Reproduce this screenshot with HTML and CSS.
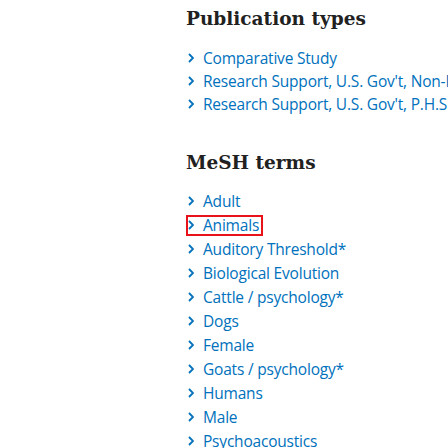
FILE: index.html
```html
<!DOCTYPE html>
<html lang="en">
<head>
<meta charset="utf-8">
<title>Publication types</title>
<link rel="stylesheet" href="styles.css">
</head>
<body>
<div class="page">
  <section class="section pubtypes">
    <h2 class="heading">Publication types</h2>
    <ul class="keywords">
      <li><a class="kw" href="#"><span class="chev"><svg viewBox="0 0 6 10" width="6" height="10"><path d="M1 1 L5 5 L1 9" fill="none" stroke="currentColor" stroke-width="1.8"/></svg></span>Comparative Study</a></li>
      <li><a class="kw" href="#"><span class="chev"><svg viewBox="0 0 6 10" width="6" height="10"><path d="M1 1 L5 5 L1 9" fill="none" stroke="currentColor" stroke-width="1.8"/></svg></span>Research Support, U.S. Gov't, Non-P.H.S.</a></li>
      <li><a class="kw" href="#"><span class="chev"><svg viewBox="0 0 6 10" width="6" height="10"><path d="M1 1 L5 5 L1 9" fill="none" stroke="currentColor" stroke-width="1.8"/></svg></span>Research Support, U.S. Gov't, P.H.S.</a></li>
    </ul>
  </section>
  <section class="section mesh">
    <h2 class="heading">MeSH terms</h2>
    <ul class="keywords">
      <li><a class="kw" href="#"><span class="chev"><svg viewBox="0 0 6 10" width="6" height="10"><path d="M1 1 L5 5 L1 9" fill="none" stroke="currentColor" stroke-width="1.8"/></svg></span>Adult</a></li>
      <li><a class="kw focus" href="#"><span class="chev"><svg viewBox="0 0 6 10" width="6" height="10"><path d="M1 1 L5 5 L1 9" fill="none" stroke="currentColor" stroke-width="1.8"/></svg></span>Animals</a></li>
      <li><a class="kw" href="#"><span class="chev"><svg viewBox="0 0 6 10" width="6" height="10"><path d="M1 1 L5 5 L1 9" fill="none" stroke="currentColor" stroke-width="1.8"/></svg></span>Auditory Threshold*</a></li>
      <li><a class="kw" href="#"><span class="chev"><svg viewBox="0 0 6 10" width="6" height="10"><path d="M1 1 L5 5 L1 9" fill="none" stroke="currentColor" stroke-width="1.8"/></svg></span>Biological Evolution</a></li>
      <li><a class="kw" href="#"><span class="chev"><svg viewBox="0 0 6 10" width="6" height="10"><path d="M1 1 L5 5 L1 9" fill="none" stroke="currentColor" stroke-width="1.8"/></svg></span>Cattle / psychology*</a></li>
      <li><a class="kw" href="#"><span class="chev"><svg viewBox="0 0 6 10" width="6" height="10"><path d="M1 1 L5 5 L1 9" fill="none" stroke="currentColor" stroke-width="1.8"/></svg></span>Dogs</a></li>
      <li><a class="kw" href="#"><span class="chev"><svg viewBox="0 0 6 10" width="6" height="10"><path d="M1 1 L5 5 L1 9" fill="none" stroke="currentColor" stroke-width="1.8"/></svg></span>Female</a></li>
      <li><a class="kw" href="#"><span class="chev"><svg viewBox="0 0 6 10" width="6" height="10"><path d="M1 1 L5 5 L1 9" fill="none" stroke="currentColor" stroke-width="1.8"/></svg></span>Goats / psychology*</a></li>
      <li><a class="kw" href="#"><span class="chev"><svg viewBox="0 0 6 10" width="6" height="10"><path d="M1 1 L5 5 L1 9" fill="none" stroke="currentColor" stroke-width="1.8"/></svg></span>Humans</a></li>
      <li><a class="kw" href="#"><span class="chev"><svg viewBox="0 0 6 10" width="6" height="10"><path d="M1 1 L5 5 L1 9" fill="none" stroke="currentColor" stroke-width="1.8"/></svg></span>Male</a></li>
      <li><a class="kw" href="#"><span class="chev"><svg viewBox="0 0 6 10" width="6" height="10"><path d="M1 1 L5 5 L1 9" fill="none" stroke="currentColor" stroke-width="1.8"/></svg></span>Psychoacoustics</a></li>
    </ul>
  </section>
</div>
</body>
</html>
```

FILE: styles.css
```css
html, body {
  margin: 0;
  padding: 0;
  background: #fff;
  overflow: hidden;
}
.page {
  width: 448px;
  height: 448px;
  overflow: hidden;
  padding-left: 186px;
  box-sizing: border-box;
  white-space: nowrap;
}
.section {
  display: block;
}
.heading {
  margin: 5px 0 0 0;
  font-family: "DejaVu Serif", serif;
  font-weight: bold;
  font-size: 18.5px;
  line-height: 28px;
  color: #212121;
}
.mesh .heading {
  margin-top: 35px;
}
.keywords {
  list-style: none;
  margin: 12px 0 0 0;
  padding: 0;
}
.keywords li {
  height: 23px;
  line-height: 23px;
  display: block;
}
.mesh .keywords {
  margin-top: 11px;
}
.mesh .keywords li {
  height: 24px;
  line-height: 24px;
}
.kw {
  display: inline-flex;
  align-items: center;
  vertical-align: middle;
  color: #0071bc;
  text-decoration: none;
  font-family: "Open Sans", sans-serif;
  font-size: 15.5px;
  letter-spacing: -0.2px;
  line-height: 17px;
  padding: 0 2px 0 0;
  border: 2px solid transparent;
}
.kw.focus {
  border-color: #e8121b;
}
.chev {
  display: inline-flex;
  width: 15px;
  color: #0071bc;
}
.chev svg {
  display: block;
}
```
